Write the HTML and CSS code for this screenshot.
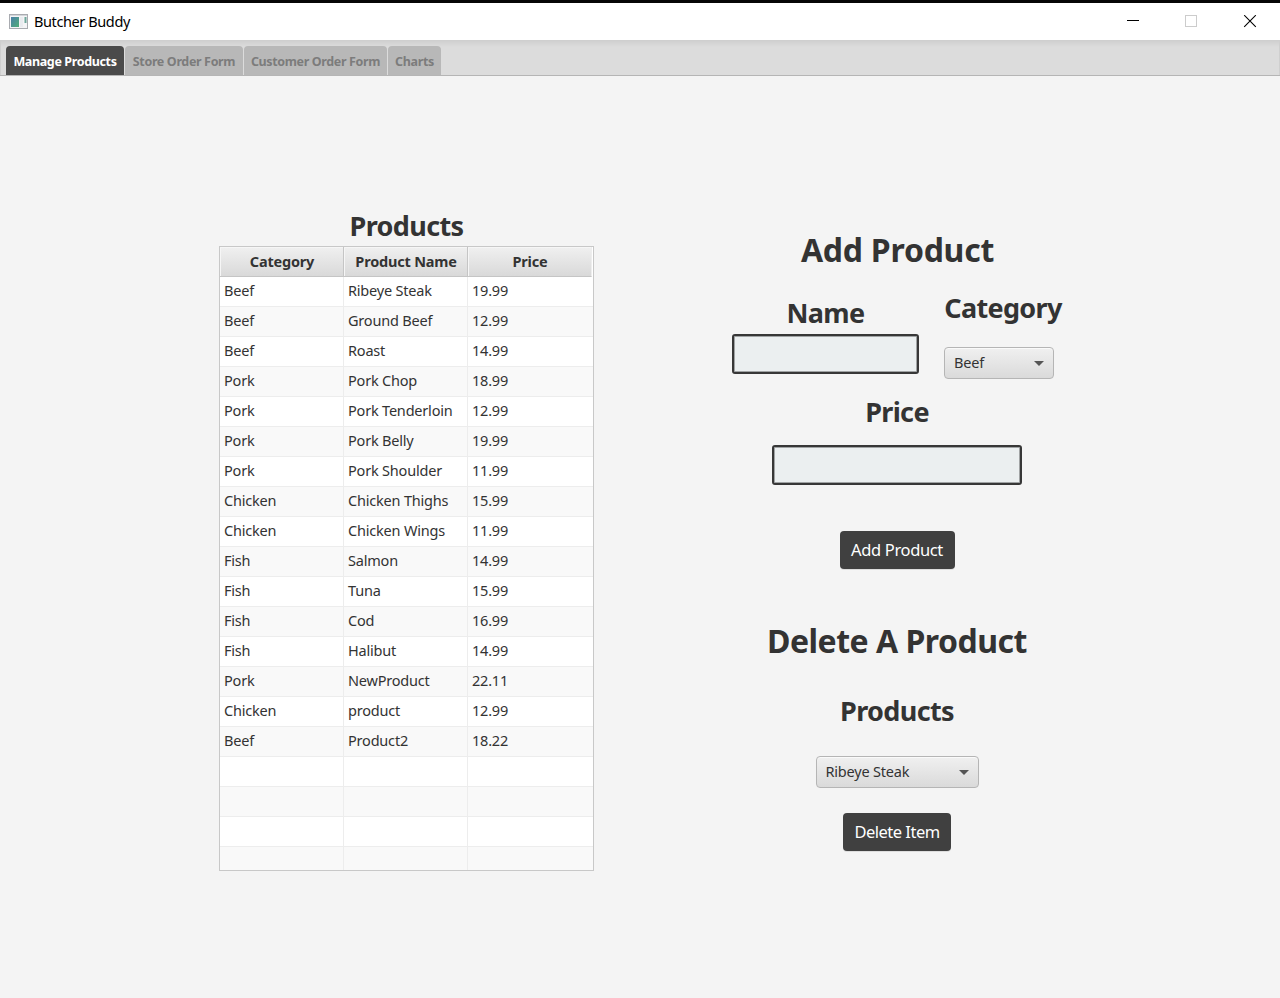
FILE: index.html
```html
<!DOCTYPE html>
<html lang="en">
<head>
<meta charset="utf-8">
<title>Butcher Buddy</title>
<link rel="stylesheet" href="styles.css">
</head>
<body>
<header class="titlebar">
  <svg class="app-icon" width="19" height="15" viewBox="0 0 19 15"><defs><linearGradient id="g" x1="0" y1="0" x2="1" y2="1"><stop offset="0" stop-color="#4a7fa8"/><stop offset="1" stop-color="#4fae78"/></linearGradient></defs><rect x=".5" y=".5" width="18" height="14" fill="#f4f4f6" stroke="#a9abb0"/><path d="M1 1.500H18" stroke="#d3d6da"/><rect x="2" y="3" width="8" height="10" fill="url(#g)"/><rect x="11" y="3" width="3" height="10" fill="#e9ebef"/><rect x="15.500" y="3" width="2" height="6" fill="#6fa79b"/></svg>
  <span class="app-name">Butcher Buddy</span>
  <svg class="window-controls" width="130" height="14" viewBox="0 0 130 14" fill="none"><path d="M0 5.500H12" stroke="#000"/><rect x="58.500" y=".5" width="11" height="11" stroke="#ccc"/><path d="M117.200 .2L128.800 11.800M128.800 .2L117.200 11.800" stroke="#000" stroke-width="1.1"/></svg>
</header>
<nav class="tabs">
  <div class="tab tab-products active"><span>Manage Products</span></div>
  <div class="tab tab-store"><span>Store Order Form</span></div>
  <div class="tab tab-customer"><span>Customer Order Form</span></div>
  <div class="tab tab-charts"><span>Charts</span></div>
</nav>
<main class="content">
  <section class="catalog">
    <h2 class="subtitle">Products</h2>
    <div class="grid">
      <div class="grid-head"><div><span>Category</span></div><div><span>Product Name</span></div><div><span>Price</span></div></div>
      <div class="grid-body" id="rows"></div>
    </div>
  </section>
  <section class="forms">
    <h1 class="title">Add Product</h1>
    <div class="form-row">
      <div class="field-name"><h2 class="subtitle">Name</h2><input class="input" aria-label="Name"></div>
      <div class="field-category"><h2 class="subtitle">Category</h2><div class="combo combo-category"><span>Beef</span><i class="arrow"></i></div></div>
    </div>
    <h2 class="subtitle price-label">Price</h2>
    <input class="input input-price" aria-label="Price">
    <button class="button add">Add Product</button>
    <h1 class="title delete-title">Delete A Product</h1>
    <h2 class="subtitle delete-label">Products</h2>
    <div class="combo combo-product"><span>Ribeye Steak</span><i class="arrow"></i></div>
    <button class="button delete">Delete Item</button>
  </section>
</main>
<script src="app.js"></script>
</body>
</html>
```
FILE: styles.css
```css
* { box-sizing: border-box; }
body { margin: 0; height: 998px; overflow: hidden; background: #f4f4f4; border-top: 3px solid #060606; color: #333; font: 14.5px "Noto Sans", "Open Sans", sans-serif; white-space: nowrap; }
h1, h2 { margin: 0; font-weight: 700; }
.titlebar { height: 37px; background: #fff; display: flex; align-items: center; padding: 0 23px 0 9px; }
.app-icon { margin-right: 6px; }
.app-name { color: #000; font-size: 14.5px; letter-spacing: -.4px; padding-bottom: 2px; }
.window-controls { margin-left: auto; }
.tabs { height: 36px; padding: 6px 5px 0 6px; display: flex; background: linear-gradient(#cecece, #dcdcdc 7px); border-bottom: 1px solid #b5b5b5; box-shadow: inset 1px 0 #cfcfcf, inset -1px 0 #cfcfcf; }
.tab { height: 29px; padding-top: 2px; border-radius: 4px 4px 0 0; background: #b8b8b8; color: #7c7c7c; font-size: 12.5px; font-weight: 700; letter-spacing: -.36px; display: flex; align-items: center; justify-content: center; margin-right: 1px; }
.tab.active { background: #4a4a4a; color: #fff; }
.tab-products { width: 118px; }
.tab-store { width: 118px; }
.tab-customer { width: 143px; }
.tab-charts { width: 53px; }
.content { display: flex; padding-left: 219px; }
.catalog { width: 375px; padding-top: 131px; }
.title { font-size: 32px; line-height: 44px; letter-spacing: -.25px; padding-left: 1px; }
.delete-title { letter-spacing: -.5px; padding: 0; }
.subtitle { font-size: 27px; line-height: 38px; letter-spacing: -.65px; text-align: center; }
.grid { margin-top: 1px; height: 625px; overflow: hidden; border: 1px solid #c8c8c8; background: #fff; }
.grid-head { display: flex; height: 30px; }
.grid-head div { width: 124px; border-right: 1px solid #c5c5c5; border-bottom: 1px solid #c5c5c5; background: linear-gradient(#f0f0f0, #d9d9d9); box-shadow: inset 1px 1px #f6f6f6; text-align: center; font-weight: 700; line-height: 29px; letter-spacing: -.2px; padding-left: 1px; }
.grid-head div:last-child { border-right-color: #eee; }
.row { display: flex; height: 30px; border-bottom: 1px solid #ededed; line-height: 26px; }
.row:nth-child(even) { background: #f9f9f9; }
.row div { width: 124px; padding-left: 4px; border-right: 1px solid #ededed; letter-spacing: -.2px; }
.row div:last-child { border-right: 0; }
.forms { width: 332px; margin-left: 137px; padding-top: 152px; display: flex; flex-direction: column; align-items: center; }
.form-row { display: flex; width: 332px; height: 107px; margin-top: 14px; }
.field-name { width: 187px; margin: 8px 25px 0 1px; }
.field-category { width: 118px; margin-top: 3px; }
.input { display: block; width: 187px; height: 40px; margin-top: 2px; border: 2px solid #373737; border-radius: 3px; background: #ebeff0; box-shadow: inset 0 0 0 1px #a0a3a4; }
.combo { height: 32px; border: 1px solid #b5b5b5; border-radius: 4px; background: linear-gradient(#f0f0f0, #dadada); box-shadow: inset 0 1px #fafafa; display: flex; align-items: center; justify-content: space-between; padding: 0 9px; letter-spacing: -.2px; }
.combo span { padding-bottom: 2px; }
.combo-category { width: 110px; margin-top: 20px; }
.combo-product { width: 163px; margin-top: 26px; }
.arrow { border: 5px solid transparent; border-top-color: #555; border-bottom: 0; }
.input-price { width: 250px; margin-top: 14px; }
.button { padding: 0 0 2px; height: 38px; border: 0; border-radius: 4px; background: #404040; color: #fff; font: 16.5px "Noto Sans", sans-serif; letter-spacing: -.35px; box-shadow: 0 1px #ddd; }
.add { width: 115px; margin: 46px 0 50px; }
.delete { width: 108px; margin-top: 25px; letter-spacing: -.5px; }
.delete-label { margin-top: 29px; }
```
FILE: app.js
```js
const products = [
  ["Beef", "Ribeye Steak", "19.99"], ["Beef", "Ground Beef", "12.99"], ["Beef", "Roast", "14.99"],
  ["Pork", "Pork Chop", "18.99"], ["Pork", "Pork Tenderloin", "12.99"], ["Pork", "Pork Belly", "19.99"],
  ["Pork", "Pork Shoulder", "11.99"], ["Chicken", "Chicken Thighs", "15.99"], ["Chicken", "Chicken Wings", "11.99"],
  ["Fish", "Salmon", "14.99"], ["Fish", "Tuna", "15.99"], ["Fish", "Cod", "16.99"], ["Fish", "Halibut", "14.99"],
  ["Pork", "NewProduct", "22.11"], ["Chicken", "product", "12.99"], ["Beef", "Product2", "18.22"],
  ["", "", ""], ["", "", ""], ["", "", ""], ["", "", ""]
];
document.getElementById("rows").innerHTML = products
  .map(p => `<div class="row">${p.map(c => `<div>${c}</div>`).join("")}</div>`).join("");
```
